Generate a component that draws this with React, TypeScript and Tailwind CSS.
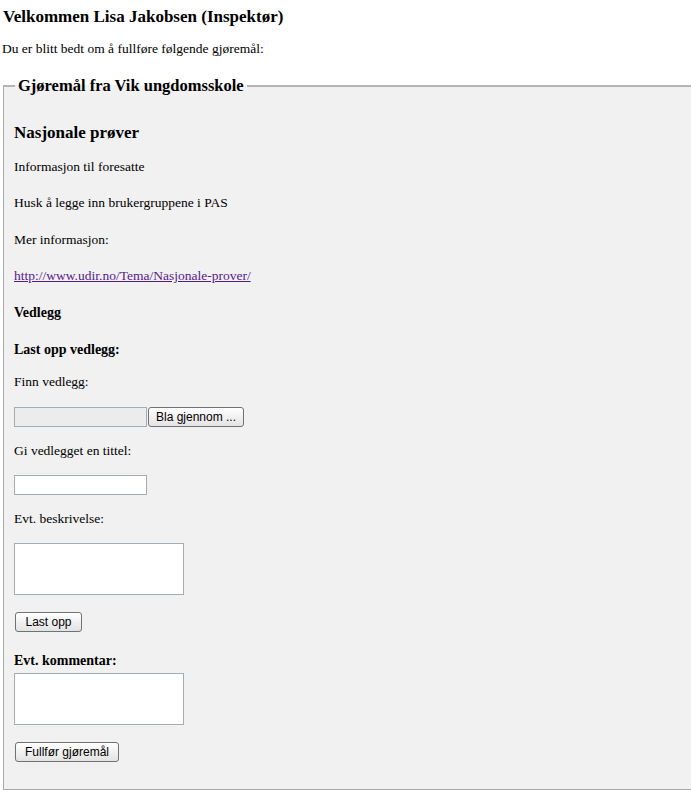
const serif = "font-['Liberation_Serif','Times_New_Roman',serif]";
const sans = "font-['Liberation_Sans',Arial,sans-serif]";

const btn =
  "block h-[20px] whitespace-nowrap rounded-[3px] border border-[#6f7378] bg-gradient-to-b from-[#ffffff] to-[#e3e3e3] px-[4px] text-[12px] leading-[18px] text-black " +
  sans;

const App = () => {
  return (
    <div className={`min-h-[800px] overflow-hidden bg-white pl-[3px] text-black ${serif}`}>
      <h1 className="pt-[7px] text-[17px] font-bold leading-[20px]">
        Velkommen Lisa Jakobsen (Inspektør)
      </h1>
      <p className="mt-[14px] -ml-[1px] text-[13.5px] leading-[16px]">
        Du er blitt bedt om å fullføre følgende gjøremål:
      </p>

      <fieldset className="mt-[19px] w-[calc(100%+20px)] border border-t-2 border-[#a9a9a9] border-t-[#b5b5b5] bg-[#f1f1f1] pb-[27px] pl-[10px]">
        <legend className="ml-[1px] px-[3px] text-[16.5px] font-bold leading-[20px]">
          Gjøremål fra Vik ungdomsskole
        </legend>

        <h2 className="mt-[26px] text-[17px] font-bold leading-[22px]">Nasjonale prøver</h2>
        <p className="mt-[15px] text-[13.5px] leading-[16px]">Informasjon til foresatte</p>
        <p className="mt-[20px] text-[13.5px] leading-[16px]">Husk å legge inn brukergruppene i PAS</p>
        <p className="mt-[21px] text-[13.5px] leading-[16px]">Mer informasjon:</p>
        <p className="mt-[20px] text-[13.5px] leading-[16px]">
          <a href="#" className="text-[#551a8b] underline">
            http://www.udir.no/Tema/Nasjonale-prover/
          </a>
        </p>
        <h4 className="mt-[21px] text-[14px] font-bold leading-[16px]">Vedlegg</h4>
        <h3 className="mt-[20px] text-[14px] font-bold leading-[18px]">Last opp vedlegg:</h3>

        <p className="mt-[15px] text-[13.5px] leading-[16px]">Finn vedlegg:</p>
        <div className="mt-[17px] flex h-[20px] items-stretch">
          <div className="w-[133px] border border-[#a5acb2] bg-[#ececec]" />
          <button className={`ml-[1px] w-[96px] ${btn}`}>Bla gjennom ...</button>
        </div>

        <p className="mt-[16px] text-[13.5px] leading-[16px]">Gi vedlegget en tittel:</p>
        <input
          type="text"
          className="mt-[16px] block h-[20px] w-[133px] border border-[#a5acb2] bg-white"
        />

        <p className="mt-[16px] text-[13.5px] leading-[16px]">Evt. beskrivelse:</p>
        <textarea className="mt-[16px] block h-[52px] w-[170px] resize-none border border-[#a5acb2] bg-white" />

        <button className={`ml-[1px] mt-[17px] w-[67px] ${btn}`}>Last opp</button>

        <h3 className="mt-[20px] text-[14px] font-bold leading-[18px]">Evt. kommentar:</h3>
        <textarea className="mt-[3px] block h-[52px] w-[170px] resize-none border border-[#a5acb2] bg-white" />

        <button className={`ml-[1px] mt-[17px] w-[104px] ${btn}`}>Fullfør gjøremål</button>
      </fieldset>
    </div>
  );
};

export default App;
